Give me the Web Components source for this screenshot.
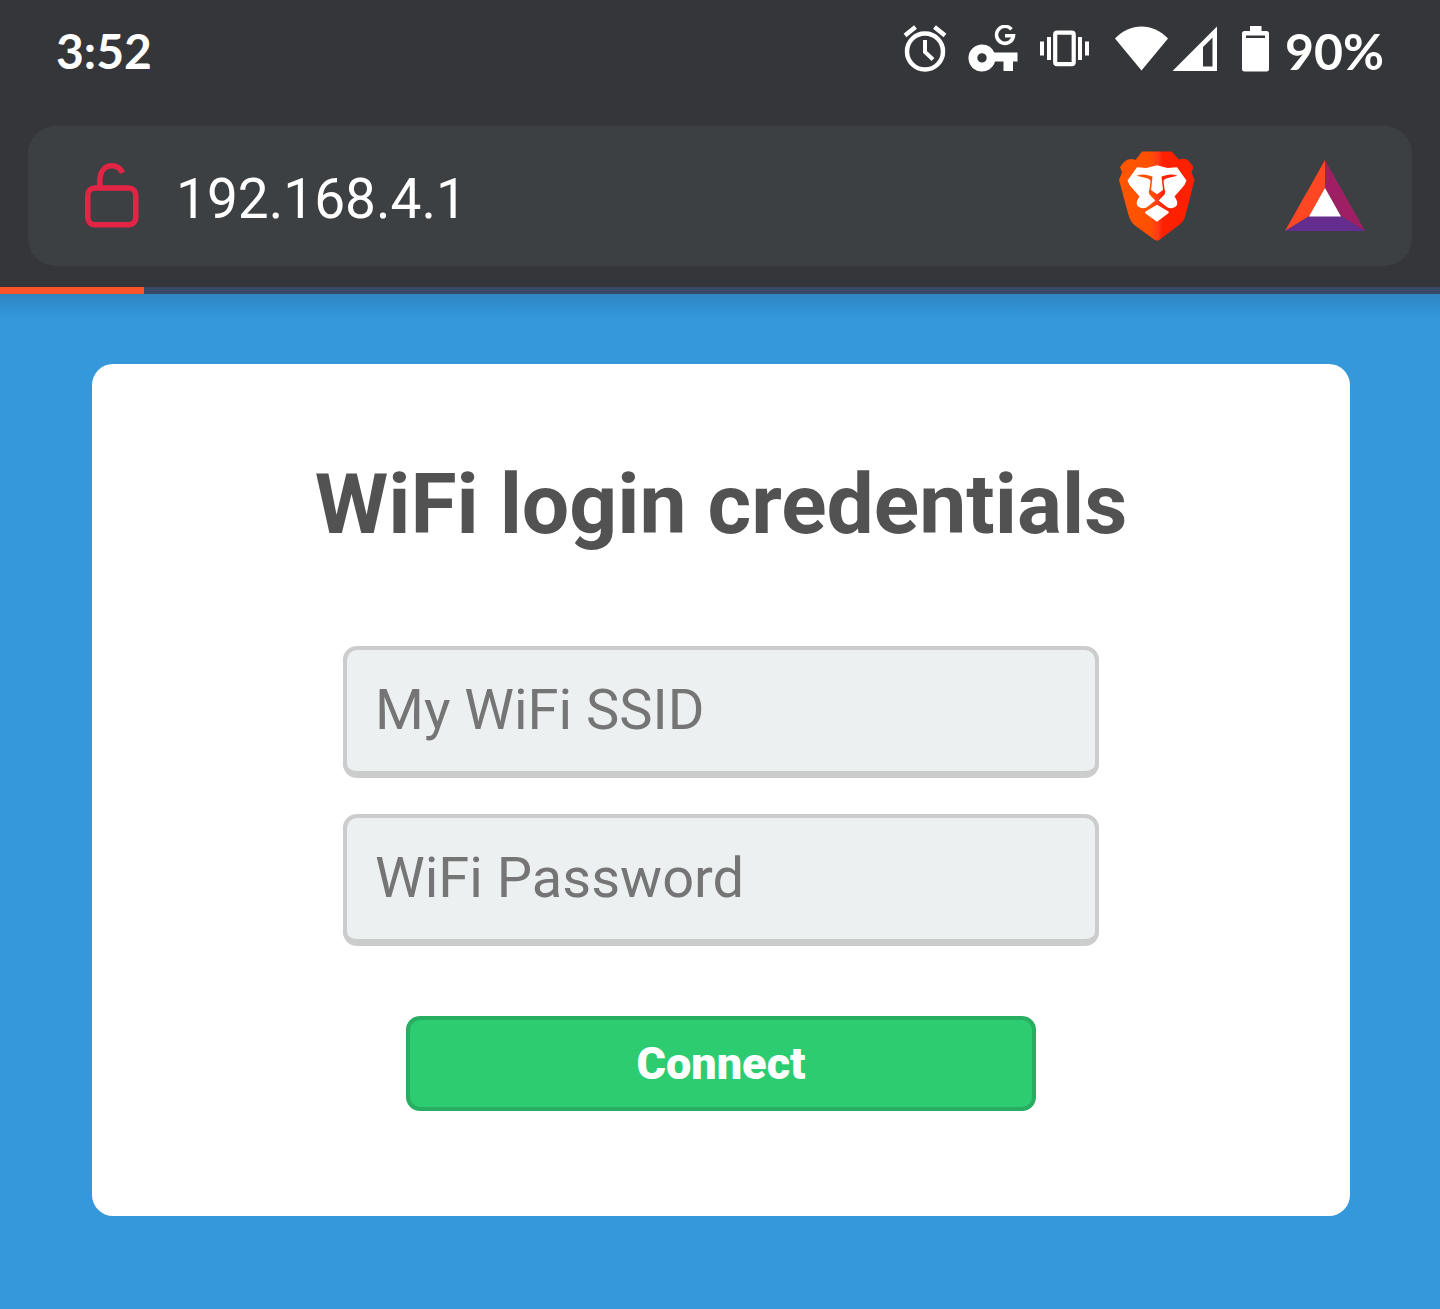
<!DOCTYPE html>
<html lang="en">
<head>
<meta charset="utf-8">
<meta name="viewport" content="width=device-width, initial-scale=1">
<title>WiFi login credentials</title>
<style>
  html, body { margin: 0; min-height: 100%; background: #3498db; }
  body { font-family: Roboto, sans-serif; }
</style>
</head>
<body>
<phone-screen>
  <status-bar slot="top" time="3:52" battery="90%"></status-bar>
  <address-bar slot="top" url="192.168.4.1"></address-bar>
  <load-progress slot="top"></load-progress>
  <login-card heading="WiFi login credentials">
    <text-field label="My WiFi SSID" type="text"></text-field>
    <text-field label="WiFi Password" type="password"></text-field>
    <submit-button slot="action">Connect</submit-button>
  </login-card>
</phone-screen>
<script>
  class BaseElement extends HTMLElement {
    connectedCallback() {
      if (this.shadowRoot) return;
      this.attachShadow({ mode: 'open' }).innerHTML = this.render();
    }
  }

  customElements.define('phone-screen', class extends BaseElement {
    render() {
      return `
        <style>
          :host { display: flex; flex-direction: column; min-height: 100vh; }
          header { background: #35363a; color: #fff; }
          main { flex: 1; padding: 70px 90px 92px 92px;
                 background: linear-gradient(#2e86c1, #3498db 24px); }
        </style>
        <header><slot name="top"></slot></header>
        <main><slot></slot></main>`;
    }
  });

  customElements.define('status-bar', class extends BaseElement {
    render() {
      return `
        <style>
          :host { display: flex; justify-content: space-between; align-items: center;
                  height: 102px; padding: 0 56px; box-sizing: border-box;
                  font: 700 48px/58px Lato, sans-serif; }
          .icons { display: flex; align-items: center; }
          .level { min-width: 100px; text-align: right; font-size: 50px; }
          svg { display: block; fill: #fff; }
          .notes { display: flex; gap: 20px; margin-right: 24px; }
          .signal { margin-right: 23px; }
          .battery { margin-right: 14px; }
        </style>
        <time>${this.getAttribute('time')}</time>
        <div class="icons">
          <div class="notes">
            <svg width="46" height="52" viewBox="901 25 46 52" role="img" aria-label="Alarm">
              <circle cx="925" cy="51.500" r="18" fill="none" stroke="#fff" stroke-width="4.500"/>
              <path d="M905 35.500l10.500-8.500M945 35.500L934.500 27" fill="none" stroke="#fff" stroke-width="4.500"/>
              <path d="M925 40v12l8 7.500" fill="none" stroke="#fff" stroke-width="4"/>
            </svg>
            <svg width="52" height="52" viewBox="967 25 52 52" role="img" aria-label="Key">
              <path fill-rule="evenodd" d="M982 44.500a13.500 13.500 0 0 1 12.300 8H1017.500V61.500H1013V71H1003.500V61.500H995A13.500 13.500 0 1 1 982 44.500zM982 53.200a4.700 4.700 0 1 0 0 9.400a4.700 4.700 0 0 0 0-9.400z"/>
              <path d="M1011.500 29.300a8.500 8.500 0 1 0 2 6.400H1005" fill="none" stroke="#fff" stroke-width="3.500"/>
            </svg>
            <svg width="51" height="52" viewBox="1039 25 51 52" role="img" aria-label="Vibrate">
              <rect x="1055.200" y="32.700" width="18.500" height="31.500" rx="2" fill="none" stroke="#fff" stroke-width="4.200"/>
              <path d="M1040 41.500h4v14h-4zM1047 37h4v23h-4zM1078 37h4v23h-4zM1085 41.500h4v14h-4z"/>
            </svg>
          </div>
          <svg width="58" height="52" viewBox="1114 25 58 52" role="img" aria-label="WiFi">
            <path d="M1115 38.500C1130 22.500 1153 22.500 1168 38.500L1141.500 70.500z"/>
          </svg>
          <svg class="signal" width="46" height="52" viewBox="1172 25 46 52" role="img" aria-label="Mobile signal">
            <path fill-rule="evenodd" d="M1217 26.500V71H1172.500zM1212.500 37.500L1203 47V66.500H1212.500z"/>
          </svg>
          <svg class="battery" width="29" height="52" viewBox="1241 25 29 52" role="img" aria-label="Battery">
            <path d="M1250 26h11.500v5h5a2.500 2.500 0 0 1 2.500 2.500v35.500a2.500 2.500 0 0 1-2.500 2.500h-22a2.500 2.500 0 0 1-2.500-2.500v-35.500a2.500 2.500 0 0 1 2.500-2.500h5.500z"/>
            <path d="M1246 35.500h19v2.500h-19z" fill="#35363a"/>
          </svg>
          <span class="level">${this.getAttribute('battery')}</span>
        </div>`;
    }
  });

  customElements.define('address-bar', class extends BaseElement {
    render() {
      return `
        <style>
          :host { display: block; padding: 24px 28px 21px; }
          .pill { display: flex; align-items: center; height: 140px; border-radius: 28px;
                  padding: 0 46px 0 56px; background: #3c4043; box-sizing: border-box; }
          input { flex: 1; min-width: 0; margin: 0 24px 0 36px; padding: 6px 0 0; border: 0; outline: 0;
                  background: none; color: #fff; font: 400 55px/66px Roboto, sans-serif; }
          button { padding: 0; border: 0; background: none; }
          .rewards { margin-left: 88px; }
          svg { display: block; }
        </style>
        <div class="pill">
          <svg width="56" height="70" viewBox="84 161 56 70" fill="none" stroke="#e32444" stroke-width="5.500" role="img" aria-label="Not secure">
            <rect x="87.750" y="188" width="48" height="36.800" rx="7"/>
            <path d="M99.800 187V181.500C99.800 171 105 165.700 112 165.700C116.800 165.700 120.500 168.500 122.500 172.800"/>
          </svg>
          <input type="text" aria-label="Address" value="${this.getAttribute('url')}">
          <button type="button" aria-label="Brave Shields">
            <svg width="78" height="92" viewBox="1118 150 78 92">
              <defs><linearGradient id="mane">
                <stop offset="0" stop-color="#ff5601"/><stop offset=".42" stop-color="#ff5000"/>
                <stop offset=".52" stop-color="#ff3a18"/><stop offset=".58" stop-color="#ff2000"/><stop offset="1" stop-color="#ff2000"/>
              </linearGradient></defs>
              <path fill="url(#mane)" d="M1142 151.500H1171.500L1179 159.500C1184 158 1187 159 1189.500 162L1193.500 167L1191.500 172.500L1194.500 180L1185.500 215Q1184 221.500 1179 225L1160.500 239Q1157 242 1153.500 239L1135 225.500Q1130.500 222 1128.500 215L1119 180L1122 172.500L1120 167L1124 162Q1129 157.500 1135.500 160z"/>
              <path fill="#fff" fill-rule="evenodd" d="M1137 167.200L1146.500 168L1157 165.200L1167.500 168L1177 167.200L1186.500 180.500L1184.500 185L1174.500 196.500C1178 201 1178.500 206 1174 207.500Q1169.500 209.500 1165.500 206L1158.700 200.500L1164.500 194.500Q1166 192 1164.500 189L1163.500 181Q1164 179 1168 178L1177.500 175.800Q1172 173.800 1167 175L1161.500 176.500L1163 190L1157 194.200L1151 190L1152.500 176.500L1147 175Q1142 173.800 1136.500 175.800L1146 178Q1150 179 1150.500 181L1149.500 189Q1148 192 1149.500 194.500L1155.300 200.500L1148.500 206Q1144.500 209.500 1140 207.500C1135.500 206 1136 201 1139.500 196.500L1129.500 185L1127.500 180.500z"/>
              <path fill="#fff" d="M1157 204.800L1168.500 211.500Q1169.500 212.500 1168 213.500L1157 221.800L1145.500 213.500Q1144.500 212.500 1145.500 211.500z"/>
            </svg>
          </button>
          <button class="rewards" type="button" aria-label="Brave Rewards">
            <svg width="82" height="74" viewBox="1284 159 82 74">
              <path fill="#ff4724" d="M1325 160V188L1309.500 216L1285 231z"/>
              <path fill="#9e1f63" d="M1325 160L1365 231L1341 216L1325 188z"/>
              <path fill="#662d91" d="M1285 231L1309.500 216H1341L1365 231z"/>
              <path fill="#fff" d="M1325 188L1341 216.500H1309z"/>
            </svg>
          </button>
        </div>`;
    }
  });

  customElements.define('load-progress', class extends BaseElement {
    render() {
      return `
        <style>
          :host { display: block; background: #394867; }
          .fill { width: 10%; height: 7px; background: #fb542b; }
        </style>
        <div role="progressbar" aria-label="Loading" aria-valuenow="10"><div class="fill"></div></div>`;
    }
  });

  customElements.define('login-card', class extends BaseElement {
    render() {
      return `
        <style>
          :host { display: block; background: #fff; border-radius: 21px; }
          form { display: flex; flex-direction: column; align-items: center; padding: 92px 0 105px; }
          h1 { margin: 0; color: #525252; font: 700 84px/98px Roboto, sans-serif; }
          .fields { display: flex; flex-direction: column; gap: 36px; width: 100%; max-width: 756px; margin: 92px 0 70px; }
          .action { width: 100%; max-width: 630px; }
        </style>
        <form>
          <h1>${this.getAttribute('heading')}</h1>
          <div class="fields"><slot></slot></div>
          <div class="action"><slot name="action"></slot></div>
        </form>`;
    }
  });

  customElements.define('text-field', class extends BaseElement {
    render() {
      const label = this.getAttribute('label');
      return `
        <style>
          :host { display: block; }
          input { display: block; box-sizing: border-box; width: 100%; margin: 0; padding: 27px 28px 28px;
                  border: 4px solid #ccc; border-bottom-width: 7px; border-radius: 14px; outline: 0;
                  background: #ecf0f1; font: 400 56px/66px Roboto, sans-serif; }
          input::placeholder { color: #757575; opacity: 1; }
        </style>
        <input type="${this.getAttribute('type')}" placeholder="${label}" aria-label="${label}">`;
    }
  });

  customElements.define('submit-button', class extends BaseElement {
    render() {
      return `
        <style>
          :host { display: block; }
          button { display: block; box-sizing: border-box; width: 100%; height: 95px; padding: 0;
                   border: 4px solid #27ae60; border-radius: 14px; background: #2ecc71; color: #fff;
                   font: 900 45px/52px Roboto, sans-serif; }
        </style>
        <button type="button"><slot></slot></button>`;
    }
  });
</script>
</body>
</html>
